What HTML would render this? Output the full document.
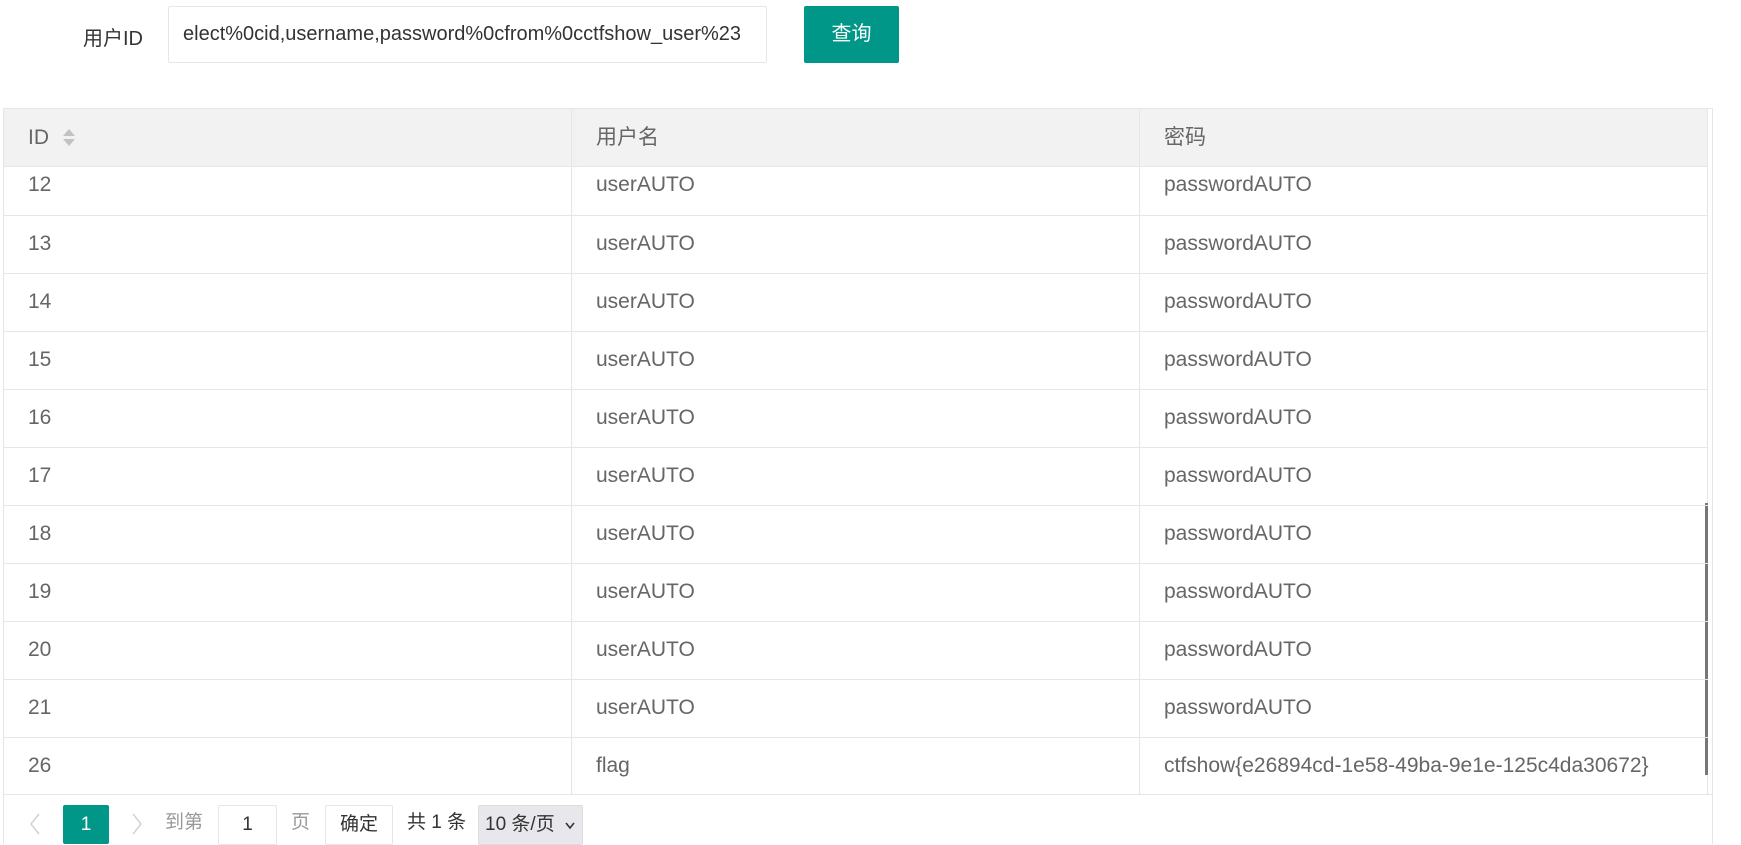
<!DOCTYPE html>
<html><head><meta charset="utf-8"><style>
*{box-sizing:border-box;margin:0;padding:0}
body{width:1741px;height:844px;overflow:hidden;background:#fff;font-family:"Liberation Sans","Noto Sans CJK SC",sans-serif;position:relative;color:#666}
.abs{position:absolute}
.lbl{left:83px;top:22px;font-size:20px;color:#333}
.inp{left:168px;top:6px;width:599px;height:57px;border:1px solid #e6e6e6;border-radius:2px;font-size:20px;color:#333;padding-left:14px;line-height:55px;white-space:nowrap;overflow:hidden}
.btn{left:804px;top:6px;width:95px;height:57px;background:#009688;color:#fff;border-radius:2px;font-size:20px;text-align:center;line-height:57px}
.tbl{left:3px;top:108px;width:1710px;height:736px;border:1px solid #e6e6e6;border-bottom:none;overflow:hidden}
.hd{position:absolute;left:0;top:0;width:1704px;height:58px;background:#f2f2f2;border-bottom:1px solid #e6e6e6}
.cell{position:absolute;font-size:21px;line-height:24px;height:24px;white-space:nowrap}
.vl{position:absolute;width:1px;background:#e6e6e6}
.hl{position:absolute;left:0;width:1704px;height:1px;background:#e6e6e6}
.pg{font-size:19px;position:absolute;line-height:24px}
</style></head><body>
<div class="abs lbl">用户ID</div>
<div class="abs inp">elect%0cid,username,password%0cfrom%0cctfshow_user%23</div>
<div class="abs btn">查询</div>
<div class="abs tbl">
 <div class="hd"></div>
 <div class="cell" style="left:24px;top:17px">ID</div>
 <svg style="position:absolute;left:58px;top:19px" width="14" height="20"><path d="M7 1 L13 8 L1 8Z" fill="#c2c2c2"/><path d="M1 11 L13 11 L7 18Z" fill="#c2c2c2"/></svg>
 <div class="cell" style="left:592px;top:17px">用户名</div>
 <div class="cell" style="left:1160px;top:17px">密码</div>
 <div class="vl" style="left:567px;top:0;height:685px;box-shadow:2px 0 4px rgba(0,0,0,.06)"></div>
 <div class="vl" style="left:1135px;top:0;height:685px"></div>
 <div class="vl" style="left:1703px;top:0;height:685px"></div>
 <div class="abs" style="left:1701px;top:394px;width:3px;height:272px;background:#777"></div>
 <div id="rows"></div>
 <div class="hl" style="top:685px;width:1710px"></div>
</div>
<script>
var ids=[12,13,14,15,16,17,18,19,20,21,26],h='';
for(var i=0;i<ids.length;i++){var ty=i==0?64:(106+(i-1)*58+17);
var u=ids[i]==26?'flag':'userAUTO',p=ids[i]==26?'ctfshow{e26894cd-1e58-49ba-9e1e-125c4da30672}':'passwordAUTO';
h+='<div class="cell" style="left:24px;top:'+ty+'px">'+ids[i]+'</div><div class="cell" style="left:592px;top:'+ty+'px">'+u+'</div><div class="cell" style="left:1160px;top:'+ty+'px">'+p+'</div>';
if(i<10)h+='<div class="hl" style="top:'+(106+i*58)+'px"></div>';}
document.getElementById('rows').innerHTML=h;
</script>
<svg class="abs" style="left:28px;top:812px" width="14" height="24"><path d="M11 2 L3 12 L11 22" fill="none" stroke="#d2d2d2" stroke-width="1.5"/></svg>
<div class="abs" style="left:63px;top:805px;width:46px;height:39px;background:#009688;border-radius:2px;color:#fff;text-align:center;line-height:39px;font-size:19px">1</div>
<svg class="abs" style="left:130px;top:812px" width="14" height="24"><path d="M3 2 L11 12 L3 22" fill="none" stroke="#d2d2d2" stroke-width="1.5"/></svg>
<div class="pg" style="left:165px;top:811px;color:#999">到第</div>
<div class="abs" style="left:218px;top:805px;width:59px;height:40px;border:1px solid #e6e6e6;border-radius:2px;text-align:center;line-height:38px;font-size:19px;color:#333">1</div>
<div class="pg" style="left:291px;top:811px;color:#999">页</div>
<div class="abs" style="left:325px;top:805px;width:68px;height:40px;border:1px solid #e6e6e6;border-radius:2px;text-align:center;line-height:38px;font-size:19px;color:#333">确定</div>
<div class="pg" style="left:407px;top:811px;color:#333">共 1 条</div>
<div class="abs" style="left:478px;top:805px;width:105px;height:40px;background:#e8e8ec;border:1px solid #ddd;border-radius:2px;font-size:19px;color:#333;line-height:38px;padding-left:6px">10 条/页<svg style="position:absolute;left:86px;top:16px" width="10" height="8"><path d="M1 1 L5 6 L9 1" fill="none" stroke="#333" stroke-width="1.6"/></svg></div>
</body></html>
